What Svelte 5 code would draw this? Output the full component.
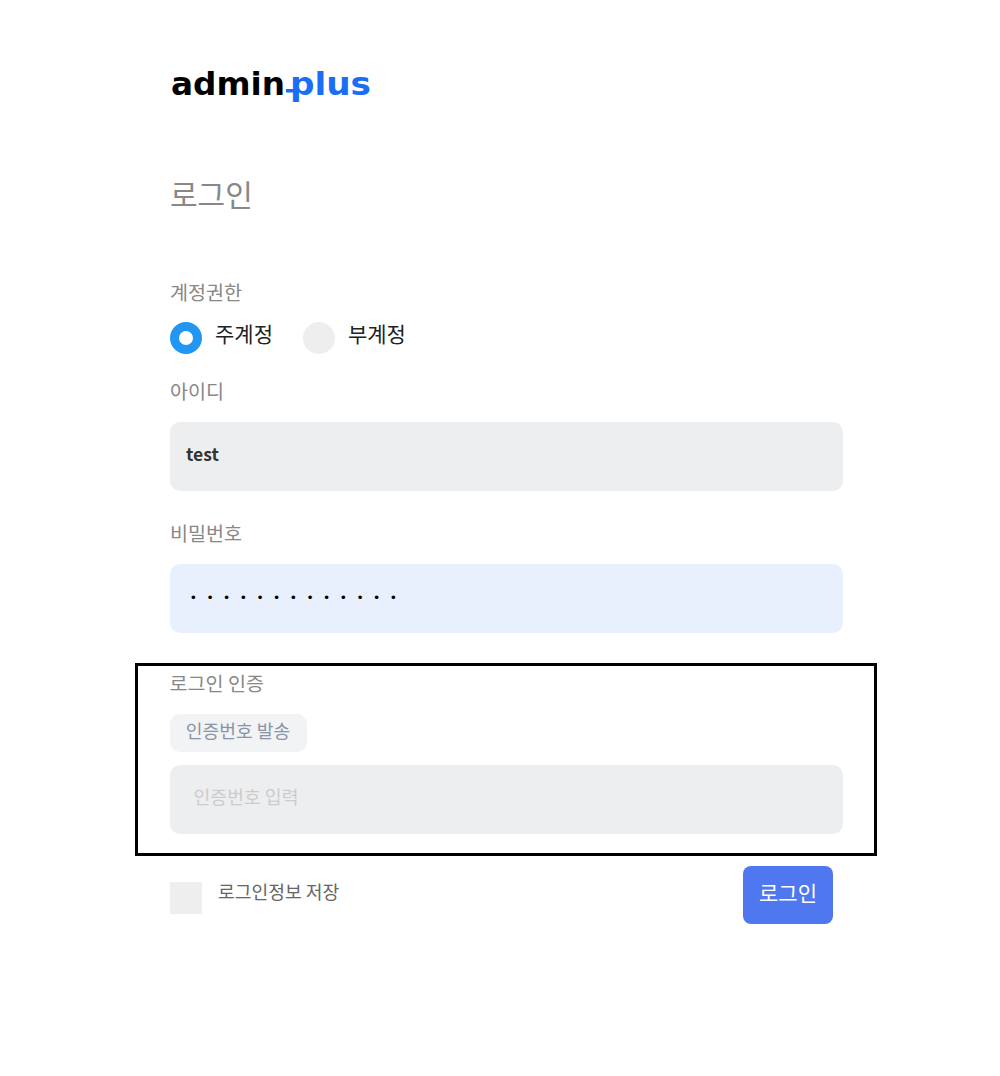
<script>
  let role = $state('main');
  let userId = $state('test');
  let password = $state('1234567890123');
  let code = $state('');
  let remember = $state(false);
</script>

<div class="page">
  <div class="block">
    <svg class="logo" width="202" height="38" viewBox="0 0 202 38" role="img" aria-label="admin.plus">
      <text x="1" y="29" class="logo-dark" textLength="114" lengthAdjust="spacingAndGlyphs">admin</text>
      <text x="120" y="29" class="logo-blue" textLength="81" lengthAdjust="spacingAndGlyphs">plus</text>
      <rect x="116" y="23" width="8" height="3.5" fill="#1a6ef5" />
    </svg>

    <h1>로그인</h1>

    <div class="label first">계정권한</div>
    <div class="radios">
      <button class="radio-item" onclick={() => (role = 'main')}>
        <span class="radio" class:on={role === 'main'}></span>
        <span>주계정</span>
      </button>
      <button class="radio-item" onclick={() => (role = 'sub')}>
        <span class="radio" class:on={role === 'sub'}></span>
        <span>부계정</span>
      </button>
    </div>

    <div class="label id-label">아이디</div>
    <input class="field id-field" bind:value={userId} />

    <div class="label pw-label">비밀번호</div>
    <input class="field pw-field" type="password" bind:value={password} />
  </div>

  <section class="frame">
    <div class="label auth-label">로그인 인증</div>
    <button class="send">인증번호 발송</button>
    <input class="field code-field" placeholder="인증번호 입력" bind:value={code} />
  </section>

  <div class="block footer">
    <button class="remember" onclick={() => (remember = !remember)}>
      <span class="check" class:on={remember}></span>
      <span>로그인정보 저장</span>
    </button>
    <button class="submit">로그인</button>
  </div>
</div>

<style>
  :global(*, *::before, *::after) {
    box-sizing: border-box;
  }

  :global(body) {
    margin: 0;
    background: #fff;
    font-family: 'Noto Sans CJK KR', 'Noto Sans', sans-serif;
  }

  .page {
    width: 741px;
    min-height: 1076px;
    margin-left: 135px;
    padding-top: 66px;
  }

  .block {
    padding: 0 33px 0 35px;
  }

  button {
    border: none;
    background: none;
    padding: 0;
    font: inherit;
    cursor: pointer;
  }

  .logo {
    display: block;
  }

  .logo-dark,
  .logo-blue {
    font-family: 'DejaVu Sans', sans-serif;
    font-weight: 700;
    font-size: 32px;
  }

  .logo-dark {
    fill: #000;
  }

  .logo-blue {
    fill: #1a6ef5;
  }

  h1 {
    margin: 67px 0 0;
    font-size: 30px;
    line-height: 44px;
    font-weight: 400;
    color: #888;
  }

  .label {
    font-size: 19.6px;
    line-height: 28px;
    color: #888;
  }

  .first {
    margin-top: 63px;
  }

  .radios {
    display: flex;
    gap: 30px;
    margin-top: 16px;
  }

  .radio-item {
    display: flex;
    gap: 13px;
    height: 32px;
    font-size: 21px;
    line-height: 22px;
    color: #222;
  }

  .radio {
    width: 32px;
    height: 32px;
    border-radius: 50%;
    background: #eee;
  }

  .radio.on {
    background: #fff;
    border: 9.5px solid #2196f3;
  }

  .id-label {
    margin-top: 23px;
  }

  .field {
    display: block;
    width: 100%;
    height: 69px;
    border: none;
    outline: none;
    border-radius: 10px;
    background: #edeef0;
    font-family: inherit;
  }

  .id-field {
    margin-top: 17px;
    padding: 0 16px 6px;
    font-size: 17.5px;
    font-weight: 700;
    color: #333;
  }

  .pw-label {
    margin-top: 28px;
  }

  .pw-field {
    margin-top: 17px;
    padding: 0 0 3px 21px;
    background: #e8f0fe;
    font-family: 'Liberation Sans', sans-serif;
    font-size: 13.33px;
    letter-spacing: 12px;
    color: #000;
  }

  .frame {
    height: 192.5px;
    margin: 30px -0.5px 0;
    padding: 2.5px 30.5px 0 32px;
    border: 3.5px solid #000;
  }

  .send {
    display: block;
    width: 137px;
    height: 38px;
    margin-top: 17px;
    border-radius: 10px;
    background: #f1f3f5;
    font-size: 18.2px;
    line-height: 32px;
    padding-bottom: 6px;
    font-weight: 400;
    color: #8a94a6;
  }

  .code-field {
    margin-top: 13px;
    padding: 0 24px 6px;
    font-size: 18.3px;
  }

  .code-field::placeholder {
    color: #ccc;
  }

  .footer {
    display: flex;
    justify-content: space-between;
    padding-right: 43px;
    margin-top: 10.5px;
  }

  .remember {
    display: flex;
    gap: 16px;
    height: 32px;
    margin-top: 16px;
    font-size: 18.2px;
    line-height: 18px;
    color: #666;
  }

  .check {
    width: 32px;
    height: 32px;
    background: #eee;
  }

  .check.on {
    background: #2196f3;
  }

  .submit {
    width: 90px;
    height: 58px;
    border-radius: 8px;
    background: #4f78f0;
    font-size: 21px;
    padding-bottom: 6px;
    color: #fff;
  }
</style>
